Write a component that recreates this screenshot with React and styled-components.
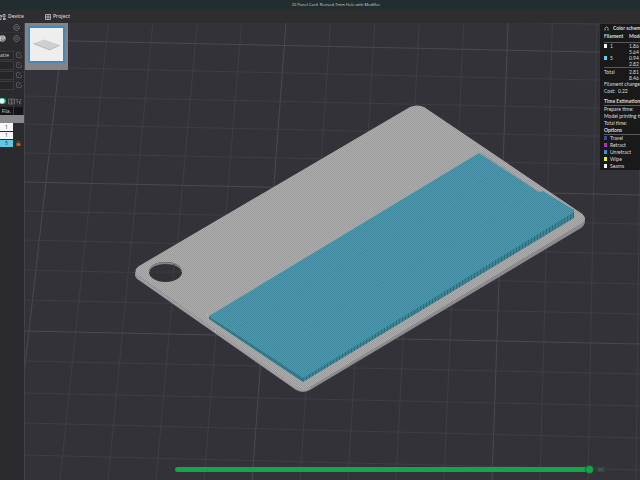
import React, { useState } from "react";
import styled, { createGlobalStyle } from "styled-components";

const GlobalStyle = createGlobalStyle`
  * { box-sizing: border-box; }
  html, body { margin: 0; background: #343239; }
  button, input, table { font: inherit; color: inherit; }
`;

const Shell = styled.div`
  display: flex;
  flex-direction: column;
  height: 100vh;
  overflow: hidden;
  color: #d2d2d2;
  font: 5px/7px "Open Sans", "Noto Sans", sans-serif;
`;
const TitleBar = styled.header`
  display: flex;
  justify-content: center;
  height: 10px;
  background: #222d2f;
`;
const Title = styled.h1`
  margin: 0;
  padding-left: 32px;
  font-size: 4px;
  font-weight: 400;
  line-height: 10px;
  white-space: pre;
`;
const TabBar = styled.nav`
  display: flex;
  align-items: center;
  gap: 21px;
  height: 13px;
  background: #2e2d2f;
`;
const Tab = styled.button`
  display: flex;
  align-items: center;
  gap: 2px;
  padding: 0;
  border: 0;
  background: none;
  font-weight: 600;
  svg { width: 6px; height: 6px; }
`;
const Body = styled.div`
  display: flex;
  flex: 1;
  min-height: 0;
`;
const Sidebar = styled.aside`
  flex: 0 0 25px;
  display: flex;
  flex-direction: column;
  overflow: hidden;
  background: #2b2a2e;
  border-right: 1px solid #434248;
`;
const ToolRow = styled.div`
  display: flex;
  justify-content: flex-end;
  align-items: center;
  gap: 7px;
  height: 10px;
  padding-right: 4px;
  border-bottom: ${(p) => (p.$line ? "1px solid #333236" : "0")};
`;
const IconButton = styled.button`
  display: flex;
  padding: 0;
  border: 0;
  background: none;
  color: ${(p) => p.$color || "#77777a"};
  svg { width: 7px; height: 7px; }
`;
const Presets = styled.div`
  padding-top: 7px;
`;
const Preset = styled.div`
  display: grid;
  grid-template-columns: 14px 1fr;
  align-items: center;
  justify-items: center;
  height: 10px;
  svg { width: 6px; height: 6px; }
`;
const PresetField = styled.input`
  width: 100%;
  height: 9px;
  padding: 0;
  border: 1px solid #3a393d;
  border-left: 0;
  background: #262528;
  outline: 0;
`;
const Options = styled.div`
  display: flex;
  align-items: center;
  justify-content: space-between;
  height: 17px;
  padding: 5px 2px 0 0;
`;
const Toggle = styled.input`
  appearance: none;
  width: 6px;
  height: 6px;
  margin: 0;
  border-radius: 0 3px 3px 0;
  background: radial-gradient(circle at 2px 3px, #effff7 2px, #1fae72 3px);
`;
const OptionIcons = styled.span`
  display: flex;
  gap: 0;
`;
const FilamentTable = styled.table`
  width: 100%;
  border-collapse: collapse;
  table-layout: fixed;
  th, td { height: 8px; padding: 0; line-height: 6px; text-align: center; }
  th { background: #151517; font-weight: 400; border-right: 1px solid #39383b; }
`;
const GroupRow = styled.tr`
  td { background: #88888a; }
`;
const FilamentCell = styled.td`
  background: ${(p) => p.$color};
  color: #263238;
  border-bottom: 1px solid #2b2a2e;
`;
const LockCell = styled.td`
  color: #c7692c;
  svg { display: block; width: 5px; height: 5px; margin: auto; }
`;
const Viewport = styled.main`
  position: relative;
  flex: 1;
  min-width: 0;
  overflow: hidden;
`;
const Scene = styled.svg`
  display: block;
  width: 100%;
  height: 100%;
`;
const Plate = styled.button`
  position: absolute;
  top: 0;
  left: 0;
  width: 43px;
  padding: 3px 3px 7px;
  border: 0;
  background: #848486;
  svg {
    display: block;
    width: 100%;
    height: 37px;
    border: 2px solid #4987b2;
    background: #eeeeef;
  }
`;
const Legend = styled.section`
  position: absolute;
  top: 1px;
  right: 0;
  width: 40px;
  height: 146px;
  overflow: hidden;
  padding-left: 4px;
  background: #19191a;
  color: #dcdcdc;
  font-family: Lato, "Open Sans", sans-serif;
  white-space: nowrap;
`;
const SchemeButton = styled.button`
  display: flex;
  align-items: center;
  gap: 4px;
  height: 9px;
  padding: 0;
  border: 0;
  background: none;
  font-weight: 700;
  svg { width: 5px; height: 5px; }
`;
const Usage = styled.table`
  width: 60px;
  border-collapse: collapse;
  table-layout: fixed;
  line-height: 6px;
  th, td { padding: 0; text-align: left; vertical-align: top; font-weight: 400; }
  th:first-child { width: 25px; }
  thead th { height: 9px; font-weight: 700; line-height: 7px; border-bottom: 1px solid #5b5b5c; }
  tbody th, tbody td { height: 12px; }
  tfoot th, tfoot td { height: 13px; padding-top: 1px; border-top: 1px solid #5b5b5c; }
`;
const Heading = styled.h2`
  width: 60px;
  height: 8px;
  margin: 0;
  font-size: 5px;
  font-weight: 700;
  line-height: 6px;
  border-bottom: 1px solid #5b5b5c;
`;
const Lines = styled.div`
  line-height: 7px;
  padding-bottom: ${(p) => p.$space || 0}px;
`;
const Move = styled.div`
  display: flex;
  align-items: center;
  gap: 3px;
  height: 7px;
`;
const Swatch = styled.span`
  display: inline-block;
  width: 3px;
  height: 4px;
  margin-right: ${(p) => p.$gap || 0}px;
  background: ${(p) => p.$color};
`;
const MoveSlider = styled.label`
  position: absolute;
  left: 150px;
  right: 35px;
  bottom: 7px;
  display: flex;
  align-items: center;
  gap: 4px;
  height: 8px;
`;
const Range = styled.input`
  appearance: none;
  flex: 1;
  min-width: 0;
  height: 5px;
  margin: 0;
  border-radius: 3px;
  background: #13a547;
  &::-webkit-slider-thumb {
    appearance: none;
    width: 7px;
    height: 7px;
    border-radius: 50%;
    background: #13a547;
    box-shadow: 0 0 0 1px #27583a;
  }
`;
const Count = styled.output`
  width: 8px;
  height: 5px;
  border-radius: 1px;
  background: #344541;
  color: #348060;
  font-size: 4px;
  line-height: 5px;
  text-align: center;
`;

const stroke = { fill: "none", stroke: "currentColor", strokeWidth: 1.5 };

const Gear = () => (
  <svg viewBox="0 0 14 14" {...stroke}>
    <path d="M5 1h4l1 2 2 1 1 3-1 3-2 1-1 2H5l-1-2-2-1-1-3 1-3 2-1z" />
    <circle cx="7" cy="7" r="2" />
  </svg>
);
const Edit = () => (
  <svg viewBox="0 0 12 12" fill="none" stroke="#69696c" strokeWidth="1.3">
    <path d="M7 1H2L1 2v8l1 1h8l1-1V6M5 7l5-6" />
  </svg>
);
const Printer = () => (
  <svg viewBox="0 0 14 14" fill="#c5c5c8">
    <path d="M3 1h7l3 3v6l-3 3H3l-2-3V5z" />
    <path d="M4 4h6M4 8h7v3H5z" stroke="#3c3c40" strokeWidth="1" />
  </svg>
);
const DeviceIcon = () => (
  <svg viewBox="0 0 12 12" {...stroke}>
    <path d="M0 3h3v3H0M6 1h4v5H6zM2 8v3H0M6 9h5v2H6" />
  </svg>
);
const ProjectIcon = () => (
  <svg viewBox="0 0 12 12" {...stroke}>
    <path d="M1 1h10v10H1zM6 1v10M1 6h10" />
  </svg>
);
const Columns = () => (
  <svg viewBox="0 0 14 14" {...stroke}>
    <path d="M1 2h12v10H1zM7 2v10M3 5h2M9 5h2M3 9h2M9 9h2" />
  </svg>
);
const Tune = () => (
  <svg viewBox="0 0 14 14" {...stroke}>
    <path d="M1 3h6M10 3h3M2 6h4l-2 5M8 10h5M8 6h4M9 6v7" />
  </svg>
);
const Lock = () => (
  <svg viewBox="0 0 12 12" {...stroke}>
    <path d="M3 6V3q0-2 3-2t3 2" />
    <path d="M2 6h8v5H2z" fill="currentColor" />
  </svg>
);

const columns = Array.from({ length: 15 }, (_, n) => n - 1);
const rows = [
  [12, 25], [40, 53, 1], [67, 81], [96, 109], [124, 137], [153, 165], [182, 195, 1],
  [211, 224], [240, 254], [270, 284], [300, 314], [331, 344, 1], [361, 374],
  [393, 406], [423, 438], [455, 470],
];

function BuildPlate() {
  return (
    <Scene viewBox="25 23 615 457" preserveAspectRatio="xMidYMid slice" role="img" aria-label="Sliced card on the build plate">
      <defs>
        <pattern id="grey" width="2" height="2" patternUnits="userSpaceOnUse">
          <path d="M0 0h2v2H0z" fill="#b0afaf" />
          <path d="M0 0h1v1H0zM1 1h1v1H1z" fill="#999999" />
        </pattern>
        <pattern id="cyan" width="2" height="2" patternUnits="userSpaceOnUse">
          <path d="M0 0h2v2H0z" fill="#4b9bb0" />
          <path d="M0 0h1v1H0zM1 1h1v1H1z" fill="#3e899e" />
        </pattern>
        <pattern id="wall" width="3" height="8" patternUnits="userSpaceOnUse">
          <path d="M0 0h3v8H0z" fill="#3a8496" />
          <path d="M0 0h1v8H0z" fill="#2f6b7a" />
        </pattern>
      </defs>
      <path d="M-200-200h1200v1200H-200z" fill="#343239" />
      <g fill="none" stroke="#403e45">
        {columns.map((n) => (
          <path key={n} d={`M${64 + 44.4 * n} 23L${12 + 48 * n} 480`} stroke={n % 5 === 0 ? "#4b494f" : undefined} />
        ))}
        {rows.map(([a, b, major]) => (
          <path key={a} d={`M24 ${a}L640 ${b}`} stroke={major ? "#4b494f" : undefined} />
        ))}
      </g>
      <path d="M135 272v4q1 3 5 5l156 109q7 4 14 0l271-162q4-3 4-7v-4z" fill="#8b8a8d" />
      <path
        fillRule="evenodd"
        fill="url(#grey)"
        d="M410 107q7-3 14 0l157 106q7 5 1 10L310 387q-7 4-14 0L139 276q-7-5 0-10zM149 272c0 6 7 10 16.500 10s16.500-4 16.500-10-7-10-16.500-10-16.500 4-16.500 10z"
      />
      <path d="M136 274l4 5 156 109q7 4 14 0" fill="none" stroke="#a09fa3" strokeWidth="2" />
      <ellipse cx="165.500" cy="272" rx="16.500" ry="10" fill="#323136" />
      <path d="M149 272c0-13 33-13 33 0-2-11-31-11-33 0z" fill="#85858a" stroke="#8d8c90" strokeWidth=".5" />
      <path d="M150 272h31M174 264l-1 17" stroke="#3f3d44" />
      <path d="M209 316v3l94 63v-5z" fill="#30788c" />
      <path d="M303 377v5l271-164v-9z" fill="url(#wall)" />
      <path d="M209 316L479 153l60 39 4-1 31 19v2L303 378z" fill="url(#cyan)" />
      <path d="M238 328L508 166M270 350L540 190" stroke="#418a9d" strokeWidth=".5" strokeDasharray="2 3" fill="none" />
      <path d="M481 153l58 39 4-1" stroke="#929396" fill="none" />
      <path d="M207 315h1M215 331h1" stroke="#d2d2d3" strokeWidth="1" />
    </Scene>
  );
}

const moves = [
  ["Travel", "#384c91"], ["Retract", "#ba2bbd"], ["Unretract", "#3a93c1"],
  ["Wipe", "#ecec28"], ["Seams", "#f1f1f1"],
];

function LegendPanel() {
  return (
    <Legend>
      <SchemeButton>
        <svg viewBox="0 0 10 10" {...stroke}><path d="M1 5l4-3 4 3M2 9V6M8 9V6" /></svg>
        Color scheme
      </SchemeButton>
      <Usage>
        <thead><tr><th>Filament</th><th>Model</th></tr></thead>
        <tbody>
          <tr><th><Swatch $color="#f4f4f4" $gap={3} />1</th><td>1.86 m<br />5.64 g</td></tr>
          <tr><th><Swatch $color="#69cce8" $gap={3} />5</th><td>0.94 m<br />2.82 g</td></tr>
        </tbody>
        <tfoot><tr><th>Total</th><td>2.81 m<br />8.46 g</td></tr></tfoot>
      </Usage>
      <Lines $space={3}>Filament change times:<br />Cost:&nbsp; 0.22</Lines>
      <Heading>Time Estimation</Heading>
      <Lines>Prepare time:<br />Model printing time:<br />Total time:</Lines>
      <Heading>Options</Heading>
      {moves.map(([name, color]) => (
        <Move key={name}><Swatch $color={color} />{name}</Move>
      ))}
    </Legend>
  );
}

export default function App() {
  const [move, setMove] = useState(85);
  return (
    <>
      <GlobalStyle />
      <Shell>
        <TitleBar><Title>20 Panel Card  Revised 7mm Hole with Modifier</Title></TitleBar>
        <TabBar>
          <Tab><DeviceIcon />Device</Tab>
          <Tab><ProjectIcon />Project</Tab>
        </TabBar>
        <Body>
          <Sidebar>
            <ToolRow $line><IconButton aria-label="Settings"><Gear /></IconButton></ToolRow>
            <ToolRow>
              <IconButton aria-label="Printer"><Printer /></IconButton>
              <IconButton aria-label="Printer settings"><Gear /></IconButton>
            </ToolRow>
            <Presets>
              {["atte", "", "", ""].map((name, n) => (
                <Preset key={n}>
                  <PresetField aria-label={`Filament ${n + 1}`} defaultValue={name} />
                  <IconButton aria-label="Edit filament"><Edit /></IconButton>
                </Preset>
              ))}
            </Presets>
            <Options>
              <Toggle type="checkbox" defaultChecked aria-label="Objects" />
              <OptionIcons>
                <IconButton aria-label="Columns"><Columns /></IconButton>
                <IconButton aria-label="Tune" $color="#2f9077"><Tune /></IconButton>
              </OptionIcons>
            </Options>
            <FilamentTable>
              <colgroup><col width="13" /><col /></colgroup>
              <thead><tr><th>Fila.</th><th /></tr></thead>
              <tbody>
                <GroupRow><td colSpan={2} /></GroupRow>
                <tr><FilamentCell $color="#f7f7f7">1</FilamentCell><td /></tr>
                <tr><FilamentCell $color="#f7f7f7">1</FilamentCell><td /></tr>
                <tr><FilamentCell $color="#5fc8e5">5</FilamentCell><LockCell><Lock /></LockCell></tr>
              </tbody>
            </FilamentTable>
          </Sidebar>
          <Viewport>
            <BuildPlate />
            <Plate aria-label="Plate 1">
              <svg viewBox="0 0 37 37">
                <path d="M4 17l12-4 17 6-11 5z" fill="#cfcfd0" />
                <path d="M4 17l18 7 11-5v1l-11 5-18-7z" fill="#a5a5a7" />
              </svg>
            </Plate>
            <LegendPanel />
            <MoveSlider>
              <Range type="range" min="0" max="85" value={move} aria-label="Move" onChange={(e) => setMove(e.target.value)} />
              <Count>{move}</Count>
            </MoveSlider>
          </Viewport>
        </Body>
      </Shell>
    </>
  );
}
